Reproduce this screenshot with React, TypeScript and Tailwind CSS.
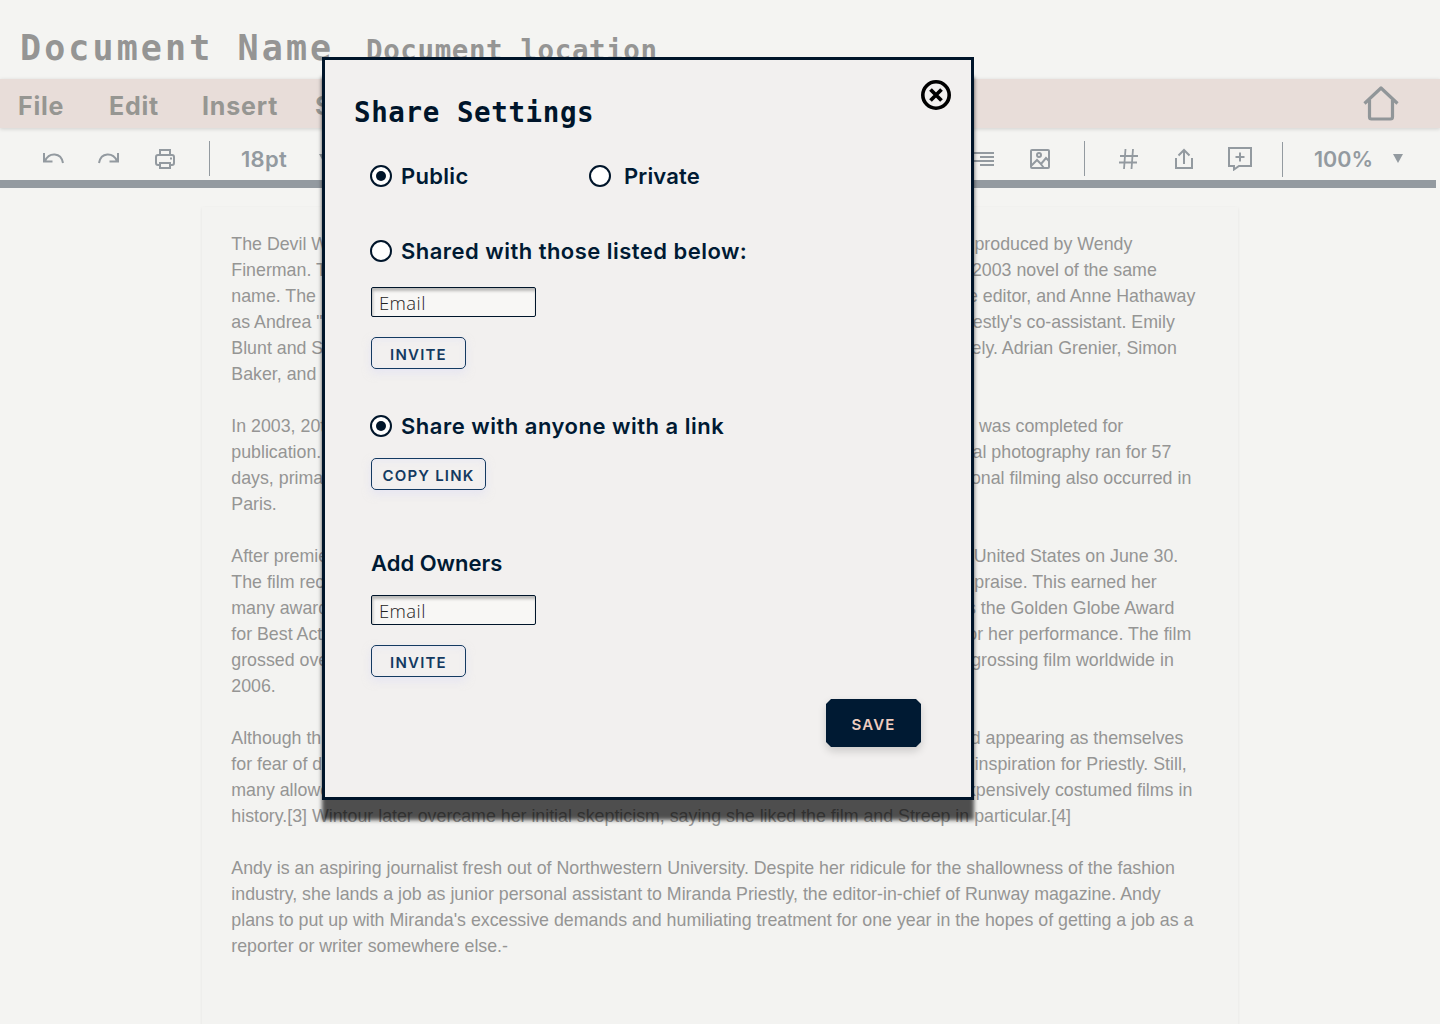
import type { ReactNode } from "react";

type Line = { left: string; right?: string; width?: number };

// Lines that run beneath the dialog are set as two runs; width is the full measure of the line.
const paragraphs: Line[][] = [
  [
    { left: "The Devil W", right: "produced by Wendy", width: 901 },
    { left: "Finerman. T", right: "2003 novel of the same", width: 925.5 },
    { left: "name. The", right: "e editor, and Anne Hathaway", width: 964 },
    { left: "as Andrea \"", right: "estly's co-assistant. Emily", width: 943.5 },
    { left: "Blunt and S", right: "ely. Adrian Grenier, Simon", width: 945.5 },
    { left: "Baker, and" },
  ],
  [
    { left: "In 2003, 20t", right: "was completed for", width: 892 },
    { left: "publication.", right: "al photography ran for 57", width: 940 },
    { left: "days, primar", right: "onal filming also occurred in", width: 960 },
    { left: "Paris." },
  ],
  [
    { left: "After premie", right: "United States on June 30.", width: 947 },
    { left: "The film rec", right: "praise. This earned her", width: 925.5 },
    { left: "many award", right: "s the Golden Globe Award", width: 943 },
    { left: "for Best Act", right: "or her performance. The film", width: 960 },
    { left: "grossed ove", right: "grossing film worldwide in", width: 942.5 },
    { left: "2006." },
  ],
  [
    { left: "Although th", right: "d appearing as themselves", width: 952 },
    { left: "for fear of d", right: "inspiration for Priestly. Still,", width: 955.5 },
    { left: "many allowe", right: "xpensively costumed films in", width: 961 },
    { left: "history.[3] Wintour later overcame her initial skepticism, saying she liked the film and Streep in particular.[4]" },
  ],
  [
    { left: "Andy is an aspiring journalist fresh out of Northwestern University. Despite her ridicule for the shallowness of the fashion" },
    { left: "industry, she lands a job as junior personal assistant to Miranda Priestly, the editor-in-chief of Runway magazine. Andy" },
    { left: "plans to put up with Miranda's excessive demands and humiliating treatment for one year in the hopes of getting a job as a" },
    { left: "reporter or writer somewhere else.-" },
  ],
];

function Icon({ className, children }: { className: string; children: ReactNode }) {
  return (
    <svg viewBox="0 0 24 24" fill="none" stroke="currentColor" strokeWidth="2" className={`size-6 shrink-0 ${className}`}>
      {children}
    </svg>
  );
}

function Caret({ className }: { className: string }) {
  return (
    <svg viewBox="0 0 10 9" className={`h-[9px] w-[10px] shrink-0 ${className}`}>
      <path d="M0 0h10L5 9z" fill="currentColor" />
    </svg>
  );
}

function Radio({ checked }: { checked?: boolean }) {
  return (
    <span className="flex size-[22px] shrink-0 items-center justify-center rounded-full border-2 border-[#00152a] bg-white">
      {checked && <span className="size-[10px] rounded-full bg-[#00152a]" />}
    </span>
  );
}

function EmailField() {
  return (
    <div className="h-[30px] w-[165px] rounded-[2px] border border-[#00152a] bg-[#f8f7f5] pl-[7px] font-['Open_Sans'] text-[18.5px] font-light leading-[30px] tracking-[0.4px] text-[#222] shadow-[inset_1px_3px_3px_rgba(0,0,0,0.25)]">
      Email
    </div>
  );
}

function OutlineButton({ width, children }: { width: string; children: ReactNode }) {
  return (
    <button
      className={`flex h-8 items-center justify-center rounded-[5px] border border-[#143a61] pt-[4px] text-[15px] font-semibold tracking-[1.2px] text-[#143a61] shadow-[0_4px_8px_rgba(220,220,245,0.5),inset_0_2px_6px_rgba(228,228,245,0.6)] ${width}`}
    >
      {children}
    </button>
  );
}

function Modal() {
  return (
    <section className="absolute left-[322px] top-[57px] flex h-[743px] w-[652px] flex-col border-[3px] border-[#00152a] bg-[#f2f0ef] text-[22px] font-semibold text-[#001a33] shadow-[0_20px_4px_rgba(0,0,0,0.68)]">
      <header className="flex h-[72px] justify-between pl-[29px] pr-5 pt-5">
        <h2 className="mt-[14px] font-['DejaVu_Sans_Mono'] text-[27.5px] font-bold leading-9 tracking-[0.6px] text-[#00152a]">Share Settings</h2>
        <svg viewBox="0 0 30 30" fill="none" stroke="#000" strokeWidth="3.8" className="size-[30px]">
          <circle cx="15" cy="15" r="13.2" strokeWidth="3.6" />
          <path d="m9.5 9.5 11 11m0-11-11 11" />
        </svg>
      </header>
      <div className="ml-[45px] mt-[30px] flex h-7 items-center">
        <Radio checked />
        <span className="ml-[9px] w-[188px] tracking-[0.3px]">Public</span>
        <Radio />
        <span className="ml-[13px] tracking-[0.15px]">Private</span>
      </div>
      <div className="ml-[45px] mt-[47px] flex h-7 items-center gap-[9px] whitespace-nowrap">
        <Radio />
        <span className="tracking-[0.47px]">Shared with those listed below:</span>
      </div>
      <div className="ml-[46px] mt-[22px] flex flex-col gap-5">
        <EmailField />
        <OutlineButton width="w-[95px]">INVITE</OutlineButton>
      </div>
      <div className="ml-[45px] mt-[43px] flex h-7 items-center gap-[9px] whitespace-nowrap">
        <Radio checked />
        <span className="tracking-[0.5px]">Share with anyone with a link</span>
      </div>
      <div className="ml-[46px] mt-[18px]">
        <OutlineButton width="w-[115px]">COPY LINK</OutlineButton>
      </div>
      <h3 className="ml-[46px] mt-[59px] h-7 leading-7">Add Owners</h3>
      <div className="ml-[46px] mt-[18px] flex flex-col gap-5">
        <EmailField />
        <OutlineButton width="w-[95px]">INVITE</OutlineButton>
      </div>
      <button className="ml-auto mr-[50px] mt-[22px] flex h-12 w-[95px] items-center justify-center rounded-[5px] bg-[#001a33] pt-[4px] text-[15px] font-semibold tracking-[1.2px] text-[#efcdc0] shadow-[0_4px_8px_rgba(0,0,0,0.16)] [corner-shape:bevel]">
        SAVE
      </button>
    </section>
  );
}

export default function App() {
  return (
    <div className="relative h-[1024px] w-[1440px] overflow-hidden bg-[#f4f4f2] font-['Inter']">
      <header className="flex h-[79px] items-baseline whitespace-nowrap pl-5 font-['DejaVu_Sans_Mono'] font-bold text-[#959594]">
        <h1 className="w-[346px] text-[35px] leading-[97px] tracking-[3.1px]">Document Name</h1>
        <p className="text-[27.5px] tracking-[0.6px]">Document location</p>
      </header>
      <nav className="flex h-[49px] items-center bg-[#e8ddd9] pl-[18px] pt-1 text-[25px] font-bold tracking-[0.8px] text-[#969692] shadow-[0_1px_4px_rgba(0,0,0,0.15)]">
        <span className="w-[91px] pt-[2px]">File</span>
        <span className="w-[93px] pt-[2px]">Edit</span>
        <span className="w-[113px] pt-[2px]">Insert</span>
        <span className="pt-[2px]">S</span>
        <svg viewBox="0 0 36 36" fill="none" stroke="#919699" strokeWidth="3.2" strokeLinejoin="round" className="mb-[5px] ml-auto mr-[41px] size-9">
          <path d="M1.5 18.500 18 3l16.500 15.500M6.500 15v17q0 2 2 2h19q2 0 2-2V15" />
        </svg>
      </nav>
      <div className="flex h-[52px] items-center pl-[41px] pt-[10px] text-[22px] font-semibold text-[#939aa0]">
        <Icon className="mr-8"><path d="M3 6v8.500h8.500M4 14C8 5 20 5 22 16" /></Icon>
        <Icon className="mr-8"><path d="M21 6v8.500h-8.500M20 14C16 5 4 5 2 16" /></Icon>
        <Icon className="mr-8"><path d="M7 8V3h10v5M7 18H5q-2 0-2-2V10q0-2 2-2h14q2 0 2 2v6q0 2-2 2h-2M7 16h10v5H7zM17 11.500h2" /></Icon>
        <span className="mb-px h-[35px] w-px bg-[#939aa0]" />
        <span className="ml-[31px] tracking-[0.3px]">18pt</span>
        <Caret className="mb-[2px] ml-[32px]" />
        <div className="ml-auto flex items-center">
          <Icon className="mr-8"><path d="M2 6h20M8 10h14M2 14h20M8 18h14" /></Icon>
          <Icon className="mr-8">
            <rect x="3" y="3" width="18" height="18" rx="1" />
            <path d="m3 19 6-6 4 4 5-6 3 3M12 16l4 5" />
            <circle cx="11" cy="8" r="2" />
          </Icon>
          <span className="mb-px mr-[31px] h-[35px] w-px bg-[#939aa0]" />
          <Icon className="mr-8"><path d="m9.500 2-1.500 20m9-20-1.500 20M4 9h18M3 15.500h18" strokeWidth="1.8" /></Icon>
          <Icon className="mr-8"><path d="M4 11v10h16V11M12 17V3M6.500 8.500 12 3l5.500 5.500" /></Icon>
          <Icon className="mr-[30px]"><path d="M1 1h22v18H11l-5 3.500V19H1zM12 5.500v9M7.500 10h9" /></Icon>
          <span className="h-[35px] w-px bg-[#939aa0]" />
          <span className="ml-[31px] w-[79px] text-[21.5px]">100%</span>
          <Caret className="mb-[2px] mr-[37px]" />
        </div>
      </div>
      <div className="h-2 w-[1436px] bg-[#939aa0]" />
      <article className="ml-[202px] mt-[19px] h-[850px] w-[1036px] whitespace-nowrap bg-[#f3f3f1] pl-[29.3px] pt-6 font-['Liberation_Sans'] text-[17.8px] leading-[26px] text-[#959594] shadow-[0_1px_3px_rgba(0,0,0,0.07)]">
        {paragraphs.map((lines) => (
          <div key={lines[0].left} className="mb-[26px]">
            {lines.map(({ left, right, width }) => (
              <p key={left} className="flex justify-between" style={{ width }}>
                <span>{left}</span>
                {right && <span>{right}</span>}
              </p>
            ))}
          </div>
        ))}
      </article>
      <Modal />
    </div>
  );
}
